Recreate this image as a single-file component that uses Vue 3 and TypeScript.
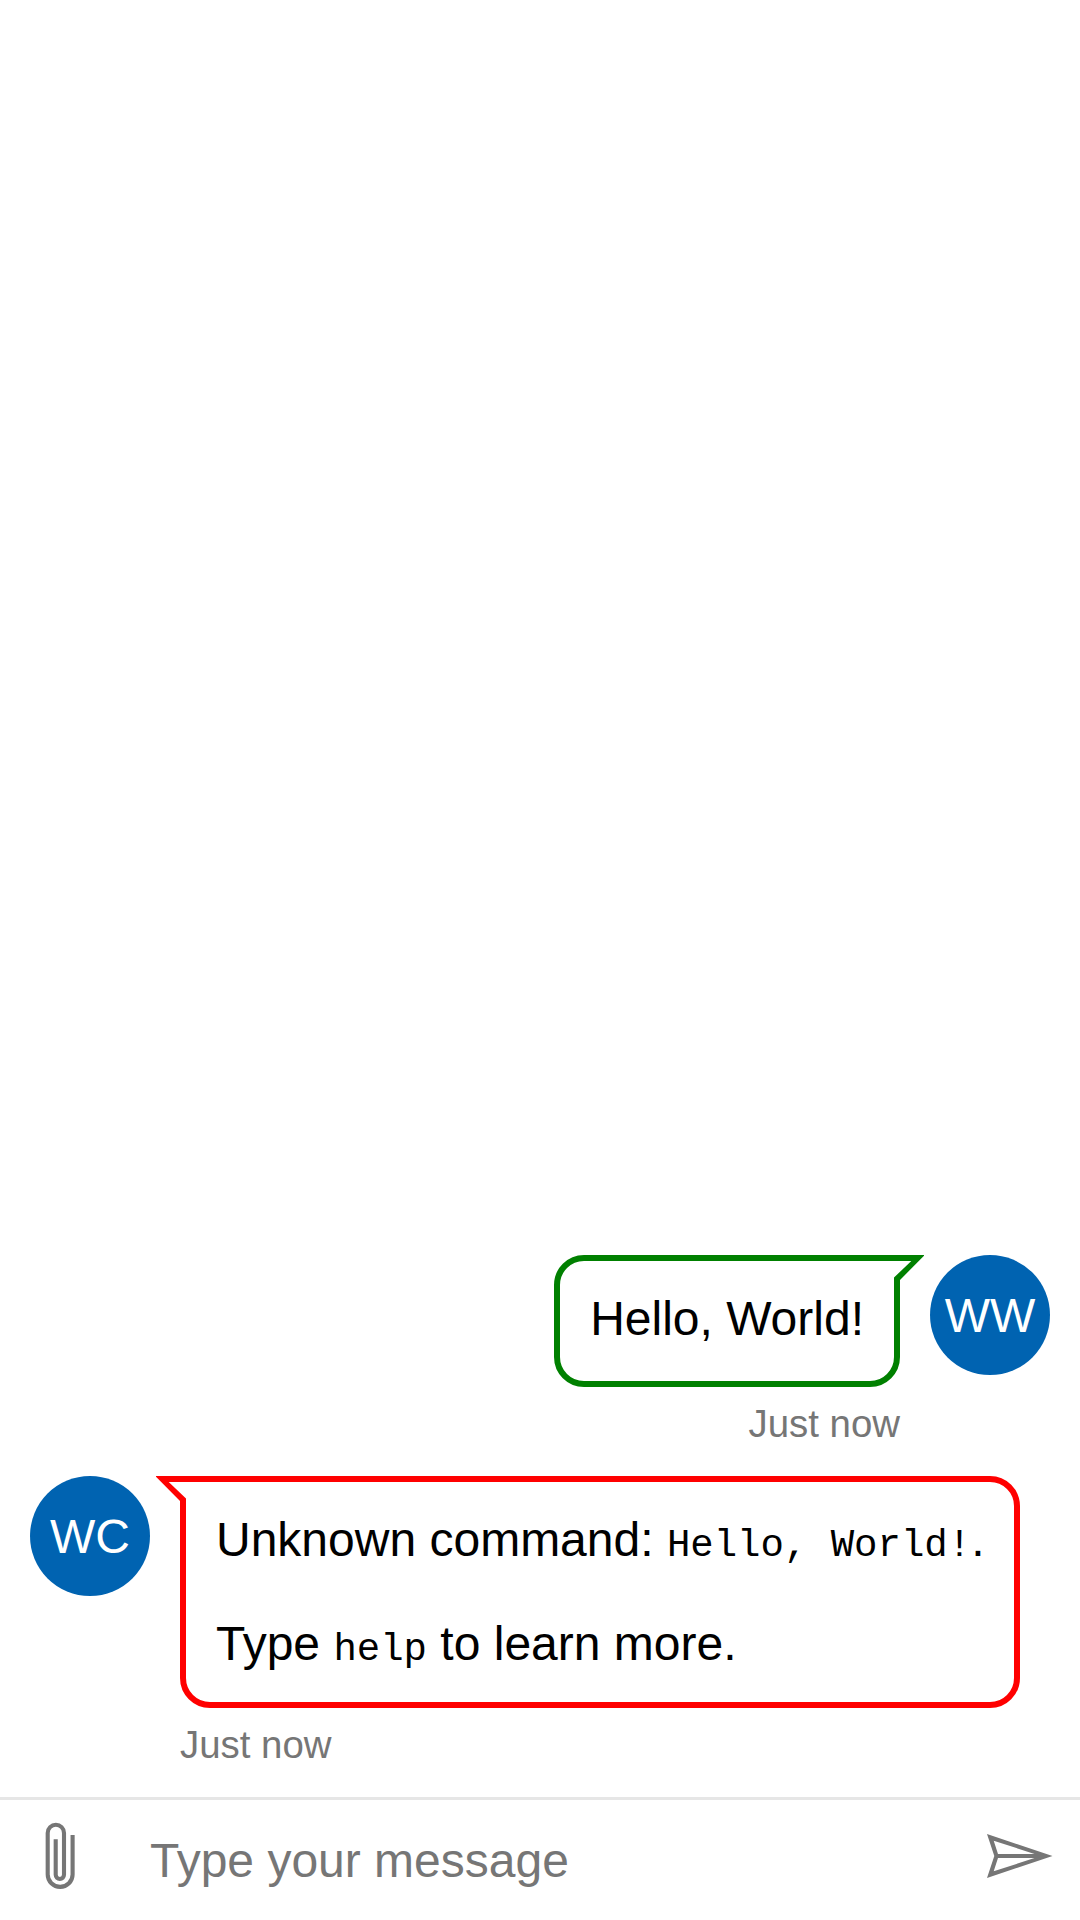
<script setup lang="ts">
interface Message { from: 'user' | 'bot'; initials: string }
const messages: Message[] = [
  { from: 'user', initials: 'WW' },
  { from: 'bot', initials: 'WC' },
]
</script>

<template>
  <main class="chat">
    <section class="transcript">
      <article v-for="m in messages" :key="m.from" class="row" :class="m.from">
        <div class="avatar">{{ m.initials }}</div>
        <div class="content">
          <div class="bubble">
            <svg class="nub" width="30" height="30" viewBox="0 0 30 30">
              <path d="M0 4H20L5 20V24H0Z" fill="#fff" />
              <path d="M0 0H30V.7L6 25V30H0V22.600L17.300 6H0Z" fill="currentColor" />
            </svg>
            <p v-if="m.from === 'user'">Hello, World!</p>
            <template v-else>
              <p>Unknown command: <code>Hello, World!</code>.</p>
              <p>Type <code>help</code> to learn more.</p>
            </template>
          </div>
          <div class="time">Just now</div>
        </div>
      </article>
    </section>
    <footer class="sendbox">
      <button class="attach" aria-label="Attach">
        <svg width="30" height="67" viewBox="0 0 30 67" fill="none" stroke="#767676" stroke-width="4.1">
          <path d="M27.600 13V52.400A12.450 12.450 0 0 1 2.700 52.400V10.900A8.150 8.150 0 0 1 19 10.900V52.800A4.150 4.150 0 0 1 10.700 52.800V17.300" />
        </svg>
      </button>
      <input type="text" placeholder="Type your message" />
      <button class="send" aria-label="Send">
        <svg width="66" height="43" viewBox="0 0 66 43" fill="#767676">
          <path fill-rule="evenodd" d="M0 0L65.500 22L0 44L7.300 22ZM6.700 6.700L11 19.900H47.500ZM11 24.100L6.700 37.300L47.500 24.100Z" />
        </svg>
      </button>
    </footer>
  </main>
</template>

<style>
body { margin: 0; background: #fff; }
</style>

<style scoped>
.chat { height: 1920px; display: flex; flex-direction: column; overflow: hidden; font-family: "Liberation Sans", Arial, sans-serif; color: #000; }
.transcript { flex: 1; display: flex; flex-direction: column; justify-content: flex-end; padding-bottom: 30px; }
.row { display: flex; padding: 0 30px; margin-top: 30px; align-items: flex-start; gap: 30px; }
.user { flex-direction: row-reverse; }
.avatar { width: 120px; height: 120px; border-radius: 50%; background: #0063b1; color: #fff; font-size: 48px; display: flex; align-items: center; justify-content: center; flex: none; }
.bubble { position: relative; box-sizing: border-box; border: 6px solid red; border-radius: 30px; padding: 30px; min-height: 132px; }
.bot .bubble { border-top-left-radius: 0; }
.user .bubble { border-color: green; border-top-right-radius: 0; }
.nub { position: absolute; top: -6px; left: -30px; color: red; transform: scaleX(-1); }
.user .nub { left: auto; right: -30px; color: green; transform: none; }
/* Clear the border's corner so the nub's outline takes its place */
.nub path:first-child { stroke: #fff; stroke-width: 2; }
p { margin: 0; font-size: 48px; line-height: 56px; white-space: nowrap; }
p + p { margin-top: 48px; }
code { font-family: "Liberation Mono", monospace; font-size: 39px; line-height: 1; }
.time { color: #767676; font-size: 38.4px; line-height: 44px; margin-top: 15px; }
.user .time { text-align: right; }
.sendbox { height: 120px; border-top: 3px solid #e6e6e6; display: flex; align-items: stretch; }
button { box-sizing: border-box; width: 120px; padding: 0 0 9px; border: 0; background: none; display: flex; align-items: center; justify-content: center; }
button svg { overflow: visible; }
input { flex: 1; min-width: 0; padding: 0 30px; border: 0; outline: 0; font: 48px "Liberation Sans", Arial, sans-serif; background: transparent; }
input::placeholder { color: #767676; opacity: 1; }
</style>
